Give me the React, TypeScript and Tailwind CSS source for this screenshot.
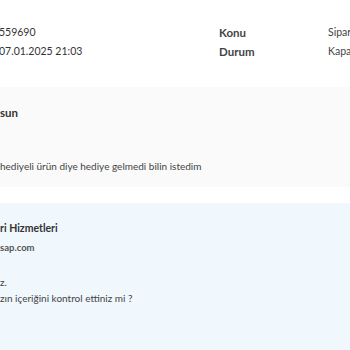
import React from 'react';

const font = { fontFamily: 'Lato, "Open Sans", Arial, sans-serif' };

function InfoRow({ value, label, detail }: { value: string; label: string; detail: string }) {
  return (
    <div className="grid grid-cols-[219px_109px_1fr] items-center h-[19px]">
      <span className="text-[10.5px] text-[#333] -ml-[1px]">{value}</span>
      <span className="text-[11.5px] font-bold text-[#444]">{label}</span>
      <span className="text-[10.5px] text-[#444] whitespace-nowrap">{detail}</span>
    </div>
  );
}

export default function App() {
  return (
    <div className="w-[350px] h-[350px] overflow-hidden bg-white text-[10px]" style={font}>
      <div className="pt-[23px] h-[87px]">
        <InfoRow value="559690" label="Konu" detail="Sipariş" />
        <InfoRow value="07.01.2025 21:03" label="Durum" detail="Kapalı" />
      </div>

      <div className="h-[100px] bg-[#fafafa] flex flex-col justify-between pt-[16px] pb-[11px]">
        <div className="text-[11.5px] font-bold text-[#333] leading-[19px]">sun</div>
        <div className="text-[#444] leading-[19px] whitespace-nowrap">
          hediyeli ürün diye hediye gelmedi bilin istedim
        </div>
      </div>

      <div className="h-[16px]" />

      <div className="bg-[#f0f7fd] h-[150px] pt-[16px]">
        <div className="font-bold text-[10.5px] text-[#333] leading-[19px] whitespace-nowrap">
          ri Hizmetleri
        </div>
        <div className="font-bold text-[9.5px] text-[#555] leading-[17px] mt-[1px]">sap.com</div>
        <div className="mt-[18px] text-[#444] leading-[16px]">
          <div>z.</div>
          <div className="whitespace-nowrap">zın içeriğini kontrol ettiniz mi ?</div>
        </div>
      </div>
    </div>
  );
}
